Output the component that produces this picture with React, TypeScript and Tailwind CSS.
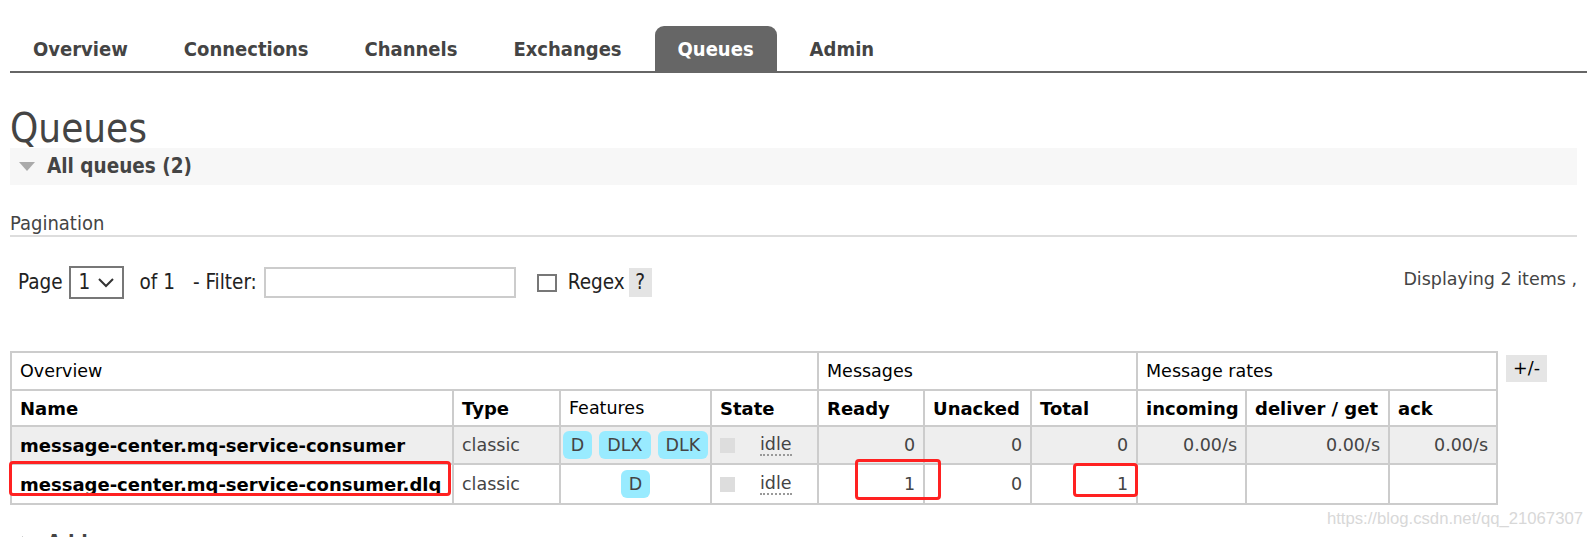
import React from "react";

const sans = "font-['DejaVu_Sans',sans-serif]";
const cond = "font-['DejaVu_Sans_Condensed','DejaVu_Sans',sans-serif]";

const tabs = ["Overview", "Connections", "Channels", "Exchanges", "Queues", "Admin"];

const cell = "whitespace-nowrap border-2 border-[#ccc] px-[8px] text-left align-middle";

function Badge({ children }: { children: React.ReactNode }) {
  return (
    <span className="inline-flex h-[28px] items-center rounded-[6px] bg-[#99ebff] px-[8px] text-[#444]">
      {children}
    </span>
  );
}

function StateCell() {
  return (
    <div className="flex items-center">
      <span className="h-[15px] w-[15px] bg-[#ddd]" />
      <span className="ml-[25px] border-b-2 border-dotted border-[#999] leading-[19px] text-[#444]">idle</span>
    </div>
  );
}

export default function App() {
  return (
    <div className={`relative h-[537px] w-[1587px] overflow-hidden bg-white text-[#444] ${sans}`}>
      <nav className={`ml-[10px] flex gap-[10px] border-b-2 border-[#666] pt-[26px] ${cond}`}>
        {tabs.map((t) => (
          <div
            key={t}
            className={`flex h-[45px] items-center rounded-t-[9px] px-[23px] text-[20px] font-bold ${t === "Queues" ? "bg-[#666] text-white" : "text-[#444]"}`}
          >
            {t}
          </div>
        ))}
      </nav>

      <div className="px-[10px]">
        <h1 className={`mt-[35px] text-[40px] leading-[40px] text-[#444] ${cond}`}>Queues</h1>

        <div className="flex h-[37px] items-center bg-[#f7f7f7] pl-[9px]">
          <svg width="16" height="9" viewBox="0 0 16 9">
            <polygon points="0,0 16,0 8,9" fill="#aaa" />
          </svg>
          <span className={`ml-[12px] text-[20.5px] font-bold text-[#444] ${cond}`}>All queues (2)</span>
        </div>

        <h3 className={`mt-[26px] border-b-2 border-[#ddd] text-[20px] leading-[24px] text-[#444] ${cond}`}>Pagination</h3>

        <div className="mt-[29px] flex items-start justify-between">
          <div className={`flex h-[33px] items-center pl-[8px] text-[20.5px] text-[#222] ${cond}`}>
            <span>Page</span>
            <div className="ml-[6px] flex h-[33px] w-[55px] items-center justify-between border-2 border-[#777] pl-[8px] pr-[8px]">
              <span>1</span>
              <svg width="16" height="10" viewBox="0 0 16 10">
                <polyline points="1,1 8,8 15,1" fill="none" stroke="#333" strokeWidth="2" />
              </svg>
            </div>
            <span className="ml-[16px]">of 1</span>
            <span className="ml-[18px]">- Filter:</span>
            <div className="ml-[7px] h-[31px] w-[252px] border-2 border-[#ccc]" />
            <span className="ml-[21px] h-[18px] w-[20px] border-2 border-[#777]" />
            <span className="ml-[11px]">Regex</span>
            <span className="ml-[4px] flex h-[29px] w-[23px] items-center justify-center bg-[#e4e4e4]">?</span>
          </div>
          <div className="text-[17.5px] text-[#444]">Displaying 2 items ,</div>
        </div>

        <div className="relative mt-[52px] flex items-start gap-[8px]">
          <table className="w-[1486px] shrink-0 table-fixed border-collapse text-[17.5px]">
            <colgroup>
              <col className="w-[442px]" />
              <col className="w-[107px]" />
              <col className="w-[151px]" />
              <col className="w-[107px]" />
              <col className="w-[106px]" />
              <col className="w-[107px]" />
              <col className="w-[106px]" />
              <col className="w-[109px]" />
              <col className="w-[143px]" />
              <col className="w-[108px]" />
            </colgroup>
            <thead>
              <tr className="h-[38px] text-black">
                <th colSpan={4} className={`${cell} font-normal`}>Overview</th>
                <th colSpan={3} className={`${cell} font-normal`}>Messages</th>
                <th colSpan={3} className={`${cell} font-normal`}>Message rates</th>
              </tr>
              <tr className="h-[36px] text-[18px] text-black">
                <th className={`${cell} font-bold`}>Name</th>
                <th className={`${cell} font-bold`}>Type</th>
                <th className={`${cell} text-[17.5px] font-normal`}>Features</th>
                <th className={`${cell} font-bold`}>State</th>
                <th className={`${cell} font-bold`}>Ready</th>
                <th className={`${cell} font-bold`}>Unacked</th>
                <th className={`${cell} font-bold`}>Total</th>
                <th className={`${cell} font-bold`}>incoming</th>
                <th className={`${cell} font-bold`}>deliver / get</th>
                <th className={`${cell} font-bold`}>ack</th>
              </tr>
            </thead>
            <tbody>
              <tr className="h-[38px] bg-[#eee]">
                <td className={`${cell} text-[18px] font-bold text-black`}>message-center.mq-service-consumer</td>
                <td className={cell}>classic</td>
                <td className={`${cell} px-[2px] text-center`}>
                  <div className="flex justify-center gap-[7px]">
                    <Badge>D</Badge>
                    <Badge>DLX</Badge>
                    <Badge>DLK</Badge>
                  </div>
                </td>
                <td className={cell}><StateCell /></td>
                <td className={`${cell} text-right`}>0</td>
                <td className={`${cell} text-right`}>0</td>
                <td className={`${cell} text-right`}>0</td>
                <td className={`${cell} text-right`}>0.00/s</td>
                <td className={`${cell} text-right`}>0.00/s</td>
                <td className={`${cell} text-right`}>0.00/s</td>
              </tr>
              <tr className="h-[40px]">
                <td className={`${cell} text-[18px] font-bold text-black`}>message-center.mq-service-consumer.dlq</td>
                <td className={cell}>classic</td>
                <td className={`${cell} px-[2px] text-center`}>
                  <div className="flex justify-center">
                    <Badge>D</Badge>
                  </div>
                </td>
                <td className={cell}><StateCell /></td>
                <td className={`${cell} text-right`}>1</td>
                <td className={`${cell} text-right`}>0</td>
                <td className={`${cell} text-right`}>1</td>
                <td className={cell}></td>
                <td className={cell}></td>
                <td className={cell}></td>
              </tr>
            </tbody>
          </table>
          <div className="mt-[4px] flex h-[27px] w-[41px] shrink-0 items-center justify-center bg-[#e5e5e5] text-[17.5px] text-black">+/-</div>

          <div className="pointer-events-none absolute left-[-1px] top-[110px] h-[35px] w-[442px] rounded-[4px] border-[3px] border-[#ff2121]" />
          <div className="pointer-events-none absolute left-[845px] top-[108px] h-[41px] w-[86px] rounded-[4px] border-[3px] border-[#ff2121]" />
          <div className="pointer-events-none absolute left-[1063px] top-[112px] h-[34px] w-[65px] rounded-[4px] border-[3px] border-[#ff2121]" />
        </div>

        <div className="mt-[20px] flex h-[37px] items-center pl-[12px]">
          <svg width="9" height="16" viewBox="0 0 9 16">
            <polygon points="0,0 9,8 0,16" fill="#aaa" />
          </svg>
          <span className={`ml-[16px] text-[20.5px] font-bold text-[#444] ${cond}`}>Add a new queue</span>
        </div>
      </div>

      <div className="pointer-events-none absolute bottom-[6px] right-[4px] font-['Liberation_Sans',sans-serif] text-[16.7px] text-[#d8d8d8]">
        https://blog.csdn.net/qq_21067307
      </div>
    </div>
  );
}
